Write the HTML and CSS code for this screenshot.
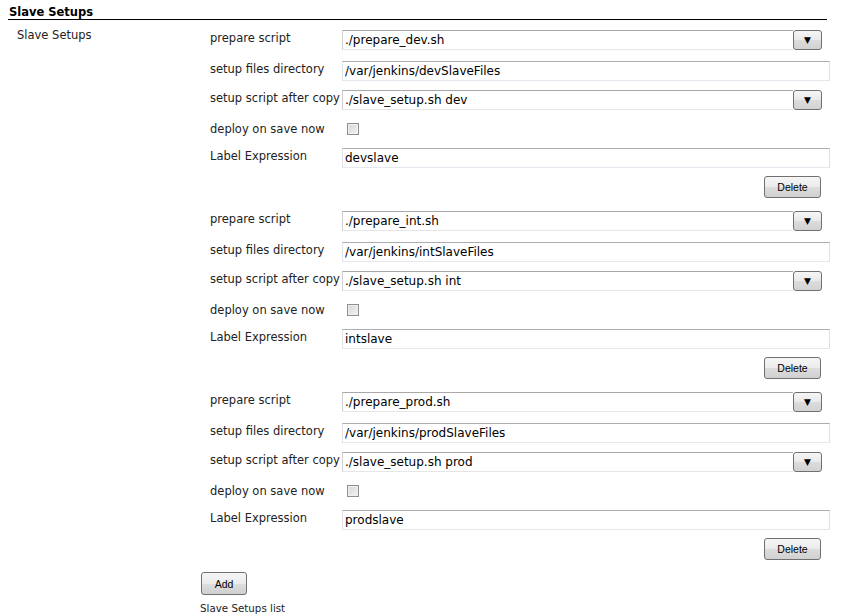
FILE: index.html
```html
<html lang="en">

<head>
  <title>Slave Setups</title>
  <link rel="stylesheet" href="styles.css">
</head>

<body>

  <div class="section-header">Slave Setups</div>

  <div class="setting">
    <div class="setting-name">Slave Setups</div>
    <div class="setting-main">

      <div class="chunk">
        <div class="row first">
          <label class="name">prepare script</label>
          <div class="combo"><span class="combo-text">./prepare_dev.sh</span><span class="combo-btn">&#9660;</span></div>
        </div>
        <div class="row">
          <label class="name">setup files directory</label>
          <input class="text" value="/var/jenkins/devSlaveFiles">
        </div>
        <div class="row">
          <label class="name">setup script after copy</label>
          <div class="combo"><span class="combo-text">./slave_setup.sh dev</span><span class="combo-btn">&#9660;</span></div>
        </div>
        <div class="row">
          <label class="name check-name">deploy on save now</label>
          <div><input type="checkbox" class="check"></div>
        </div>
        <div class="row">
          <label class="name">Label Expression</label>
          <input class="text" value="devslave">
        </div>
        <div class="row del"><button class="btn delete">Delete</button></div>
      </div>

      <div class="chunk">
        <div class="row first">
          <label class="name">prepare script</label>
          <div class="combo"><span class="combo-text">./prepare_int.sh</span><span class="combo-btn">&#9660;</span></div>
        </div>
        <div class="row">
          <label class="name">setup files directory</label>
          <input class="text" value="/var/jenkins/intSlaveFiles">
        </div>
        <div class="row">
          <label class="name">setup script after copy</label>
          <div class="combo"><span class="combo-text">./slave_setup.sh int</span><span class="combo-btn">&#9660;</span></div>
        </div>
        <div class="row">
          <label class="name check-name">deploy on save now</label>
          <div><input type="checkbox" class="check"></div>
        </div>
        <div class="row">
          <label class="name">Label Expression</label>
          <input class="text" value="intslave">
        </div>
        <div class="row del"><button class="btn delete">Delete</button></div>
      </div>

      <div class="chunk">
        <div class="row first">
          <label class="name">prepare script</label>
          <div class="combo"><span class="combo-text">./prepare_prod.sh</span><span class="combo-btn">&#9660;</span></div>
        </div>
        <div class="row">
          <label class="name">setup files directory</label>
          <input class="text" value="/var/jenkins/prodSlaveFiles">
        </div>
        <div class="row">
          <label class="name">setup script after copy</label>
          <div class="combo"><span class="combo-text">./slave_setup.sh prod</span><span class="combo-btn">&#9660;</span></div>
        </div>
        <div class="row">
          <label class="name check-name">deploy on save now</label>
          <div><input type="checkbox" class="check"></div>
        </div>
        <div class="row">
          <label class="name">Label Expression</label>
          <input class="text" value="prodslave">
        </div>
        <div class="row del"><button class="btn delete">Delete</button></div>
      </div>

      <button class="btn add">Add</button>
      <div class="desc">Slave Setups list</div>

    </div>
  </div>

</body>

</html>
```

FILE: styles.css
```css
body {
  font-family: 'DejaVu Sans', Verdana, sans-serif;
  font-size: 11.5px;
  color: #222;
  background-color: #fff;
  margin: 0;
  padding: 5px 8px 0 8px;
}

.section-header {
  width: 819px;
  font-weight: bold;
  font-size: 11.5px;
  line-height: 14px;
  color: #000;
  border-bottom: 1px solid #000;
  padding-left: 1px;
  box-sizing: border-box;
}

.setting {
  display: grid;
  grid-template-columns: 192px 630px;
  margin-top: 9px;
}

.setting-name {
  padding-left: 9px;
  line-height: 13px;
  margin-top: 0;
}

.row {
  display: grid;
  grid-template-columns: 142px 488px;
  align-items: start;
  height: 29px;
}

.row.first {
  height: 31px;
}

.row.del {
  display: flex;
  justify-content: flex-end;
  height: 34px;
  padding-right: 9px;
}

.chunk:last-of-type .row.del {
  height: 32px;
}

.name {
  padding-left: 10px;
  padding-top: 3px;
  line-height: 13px;
  white-space: nowrap;
}

.check-name {
  padding-top: 5px;
}

.combo {
  display: flex;
  width: 480px;
  height: 20px;
  margin-top: 1px;
  font-size: 12px;
}

.combo-text {
  flex: 1;
  border-top: 1px solid #a9a9a9;
  border-left: 1px solid #d0d0d0;
  border-bottom: 1px solid #e6e6e6;
  padding-left: 2px;
  line-height: 18px;
  color: #000;
}

.combo-btn {
  width: 29px;
  height: 20px;
  box-sizing: border-box;
  border: 1px solid #707070;
  border-radius: 3px;
  background: linear-gradient(#f6f6f6, #e9e9e9 50%, #dcdcdc 51%, #d2d2d2);
  font-size: 9px;
  line-height: 18px;
  text-align: center;
  color: #000;
}

.text {
  width: 488px;
  height: 20px;
  margin: 1px 0 0 0;
  box-sizing: border-box;
  border: 1px solid;
  border-color: #abadb3 #dbdfe6 #e3e9ef #e2e3ea;
  padding: 0 2px;
  font-family: 'DejaVu Sans', Verdana, sans-serif;
  font-size: 12px;
  color: #000;
  outline: none;
}

.check {
  appearance: none;
  width: 12px;
  height: 12px;
  margin: 5px 0 0 5px;
  border: 1px solid #8e8f8f;
  background: linear-gradient(135deg, #d6d6d6, #f4f4f4);
  box-shadow: inset 0 0 0 1px #f0f0f0;
  display: block;
}

.btn {
  font-family: 'Liberation Sans', Arial, sans-serif;
  font-size: 10.5px;
  color: #000;
  border: 1px solid #707070;
  border-radius: 3px;
  background: linear-gradient(#f6f6f6, #ebebeb 50%, #dddddd 51%, #d0d0d0);
  padding: 0;
}

.delete {
  width: 57px;
  height: 22px;
  margin-top: 0;
}

.add {
  width: 46px;
  height: 23px;
  margin-left: 1px;
}

.desc {
  font-size: 10.3px;
  line-height: 12px;
  margin-top: 7px;
  margin-left: 0;
}
```
